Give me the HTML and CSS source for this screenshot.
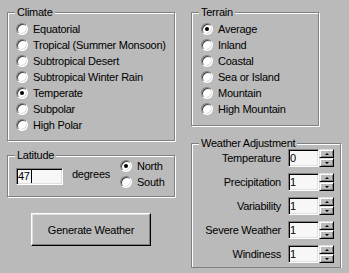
FILE: index.html
```html
<!DOCTYPE html>
<html lang="en">
<head>
  <meta charset="UTF-8"/>
  <title>Weather Generator</title>
  <meta name="viewport" content="width=device-width, initial-scale=1.0"/>
  <link rel="stylesheet" href="styles.css">
</head>
<body>

  <div class="dialog">

    <div class="col">
      <div class="group climate">
        <div class="group-title">Climate</div>
        <div class="options">
          <div class="option"><span class="radio"></span>Equatorial</div>
          <div class="option"><span class="radio"></span>Tropical (Summer Monsoon)</div>
          <div class="option"><span class="radio"></span>Subtropical Desert</div>
          <div class="option"><span class="radio"></span>Subtropical Winter Rain</div>
          <div class="option"><span class="radio checked"></span>Temperate</div>
          <div class="option"><span class="radio"></span>Subpolar</div>
          <div class="option"><span class="radio"></span>High Polar</div>
        </div>
      </div>

      <div class="group latitude">
        <div class="group-title">Latitude</div>
        <div class="latitude-row">
          <div class="edit lat-edit">47<span class="caret"></span></div>
          <span class="unit">degrees</span>
          <div class="hemi">
            <div class="option"><span class="radio checked"></span>North</div>
            <div class="option"><span class="radio"></span>South</div>
          </div>
        </div>
      </div>

      <button class="button">Generate Weather</button>
    </div>

    <div class="col">
      <div class="group terrain">
        <div class="group-title">Terrain</div>
        <div class="options">
          <div class="option"><span class="radio checked"></span>Average</div>
          <div class="option"><span class="radio"></span>Inland</div>
          <div class="option"><span class="radio"></span>Coastal</div>
          <div class="option"><span class="radio"></span>Sea or Island</div>
          <div class="option"><span class="radio"></span>Mountain</div>
          <div class="option"><span class="radio"></span>High Mountain</div>
        </div>
      </div>

      <div class="group weather">
        <div class="group-title">Weather Adjustment</div>
        <div class="adjust">
          <span class="adjust-label">Temperature</span>
          <div class="edit spin-edit">0</div>
          <div class="spinner"><span class="spin up"></span><span class="spin down"></span></div>

          <span class="adjust-label">Precipitation</span>
          <div class="edit spin-edit">1</div>
          <div class="spinner"><span class="spin up"></span><span class="spin down"></span></div>

          <span class="adjust-label">Variability</span>
          <div class="edit spin-edit">1</div>
          <div class="spinner"><span class="spin up"></span><span class="spin down"></span></div>

          <span class="adjust-label">Severe Weather</span>
          <div class="edit spin-edit">1</div>
          <div class="spinner"><span class="spin up"></span><span class="spin down"></span></div>

          <span class="adjust-label">Windiness</span>
          <div class="edit spin-edit">1</div>
          <div class="spinner"><span class="spin up"></span><span class="spin down"></span></div>
        </div>
      </div>
    </div>

  </div>

</body>
</html>
```

FILE: styles.css
```css
* {
  box-sizing: border-box;
}
body {
  margin: 0;
  background: #bababa;
  font-family: "Liberation Sans", Arial, sans-serif;
  font-size: 11px;
  letter-spacing: -0.25px;
  color: #000;
}
.dialog {
  display: grid;
  grid-template-columns: 168px 150px;
  column-gap: 16px;
  align-items: start;
  padding: 12px 0 0 7px;
}

/* etched group box */
.group {
  border: 1px solid #808080;
  box-shadow: 1px 1px 0 #fff, inset 1px 1px 0 #fff;
}
.group-title {
  display: table;
  margin: -7px 0 0 7px;
  padding: 0 2px;
  line-height: 13px;
  background: #bababa;
}

.options {
  margin-top: 2px;
}
.climate .options {
  padding: 0 0 7px 8px;
}
.terrain {
  width: 128px;
}
.terrain .options {
  padding: 0 0 8px 9px;
}
.option {
  display: flex;
  align-items: center;
  height: 16px;
  white-space: nowrap;
}

/* classic radio button */
.radio {
  flex: none;
  width: 12px;
  height: 12px;
  margin-right: 5px;
  border-radius: 50%;
  background: #fff;
  border: 1px solid;
  border-color: #808080 #fff #fff #808080;
  box-shadow: inset 1px 1px 0 #404040, inset -1px -1px 0 #dfdfdf;
}
.radio.checked::after {
  content: "";
  display: block;
  width: 4px;
  height: 4px;
  margin: 3px;
  border-radius: 50%;
  background: #000;
}

/* sunken edit field */
.edit {
  background: #f7f7f7;
  border: 1px solid;
  border-color: #808080 #fff #fff #808080;
  box-shadow: inset 1px 1px 0 #000, inset -1px -1px 0 #dfdfdf;
  padding-left: 1px;
}

.latitude {
  margin-top: 14px;
}
.latitude-row {
  display: flex;
  align-items: flex-start;
  margin-top: -4px;
  padding: 0 0 6px 8px;
}
.lat-edit {
  width: 47px;
  height: 17px;
  margin-top: 10px;
  line-height: 15px;
  display: flex;
  align-items: center;
}
.caret {
  display: inline-block;
  width: 1px;
  height: 13px;
  margin-left: 1px;
  background: #000;
}
.unit {
  width: 48px;
  margin: 10px 0 0 9px;
  line-height: 13px;
}

.button {
  display: block;
  width: 120px;
  height: 33px;
  margin: 16px 0 0 24px;
  padding: 0;
  font: inherit;
  letter-spacing: inherit;
  color: #000;
  background: #bababa;
  border: 1px solid;
  border-color: #fff #000 #000 #fff;
  box-shadow: inset -1px -1px 0 #808080, inset 1px 1px 0 #dfdfdf;
}

.weather {
  margin-top: 17px;
}
.adjust {
  display: grid;
  grid-template-columns: 1fr 31px 15px;
  grid-auto-rows: 18px;
  row-gap: 6px;
  align-items: center;
  margin-top: -1px;
  padding: 0 6px 4px 10px;
}
.adjust-label {
  text-align: right;
  padding-right: 7px;
  white-space: nowrap;
}
.spin-edit {
  height: 18px;
  line-height: 16px;
}

/* up-down control */
.spinner {
  display: flex;
  flex-direction: column;
  height: 18px;
}
.spin {
  display: flex;
  align-items: center;
  justify-content: center;
  height: 9px;
  background: #bababa;
  border: 1px solid;
  border-color: #dfdfdf #000 #000 #dfdfdf;
  box-shadow: inset 1px 1px 0 #fff, inset -1px -1px 0 #808080;
}
.spin::before {
  content: "";
  border-left: 2px solid transparent;
  border-right: 2px solid transparent;
}
.spin.up::before {
  border-bottom: 2px solid #000;
}
.spin.down::before {
  border-top: 2px solid #000;
}
```
